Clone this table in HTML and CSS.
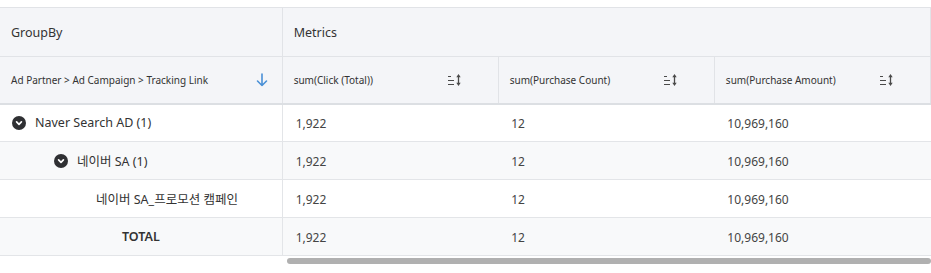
FILE: index.html
```html
<!DOCTYPE html>
<html lang="ko">
  <head>
    <meta charset="UTF-8" />
    <title>Report</title>
    <link rel="stylesheet" href="styles.css">
  </head>
  <body>
    <div class="report">
      <table class="grid">
        <colgroup>
          <col class="grid__col-group" />
          <col class="grid__col-metric" />
          <col class="grid__col-metric" />
          <col class="grid__col-metric" />
        </colgroup>
        <thead>
          <tr class="grid__head-top">
            <th>GroupBy</th>
            <th colspan="3">Metrics</th>
          </tr>
          <tr class="grid__head-sub">
            <th>
              <div class="head-cell">
                <span>Ad Partner &gt; Ad Campaign &gt; Tracking Link</span>
                <svg class="head-cell__arrow" viewBox="0 0 12 14" fill="none" stroke="currentColor" stroke-width="1.6" stroke-linecap="round" stroke-linejoin="round">
                  <path d="M6 1v11.5M1.5 8l4.5 4.5L10.5 8" />
                </svg>
              </div>
            </th>
            <th>
              <div class="head-cell">
                <span>sum(Click (Total))</span>
                <svg class="head-cell__sort" viewBox="0 0 16 14">
                  <path d="M1 3.5h3M1 7.5h6M1 11.5h6" stroke="currentColor" stroke-width="1.2" />
                  <path d="M11.5 3v8" stroke="currentColor" stroke-width="1.3" />
                  <path d="M9.3 4.2L11.5 1l2.2 3.2zM9.3 9.8L11.5 13l2.2-3.2z" fill="currentColor" />
                </svg>
              </div>
            </th>
            <th>
              <div class="head-cell">
                <span>sum(Purchase Count)</span>
                <svg class="head-cell__sort" viewBox="0 0 16 14">
                  <path d="M1 3.5h3M1 7.5h6M1 11.5h6" stroke="currentColor" stroke-width="1.2" />
                  <path d="M11.5 3v8" stroke="currentColor" stroke-width="1.3" />
                  <path d="M9.3 4.2L11.5 1l2.2 3.2zM9.3 9.8L11.5 13l2.2-3.2z" fill="currentColor" />
                </svg>
              </div>
            </th>
            <th>
              <div class="head-cell">
                <span>sum(Purchase Amount)</span>
                <svg class="head-cell__sort" viewBox="0 0 16 14">
                  <path d="M1 3.5h3M1 7.5h6M1 11.5h6" stroke="currentColor" stroke-width="1.2" />
                  <path d="M11.5 3v8" stroke="currentColor" stroke-width="1.3" />
                  <path d="M9.3 4.2L11.5 1l2.2 3.2zM9.3 9.8L11.5 13l2.2-3.2z" fill="currentColor" />
                </svg>
              </div>
            </th>
          </tr>
        </thead>
        <tbody>
          <tr>
            <td>
              <div class="group group--l1">
                <svg class="group__toggle" viewBox="0 0 14 14">
                  <circle cx="7" cy="7" r="7" fill="#2f3033" />
                  <path d="M4.6 5.9L7 8.3l2.4-2.4" fill="none" stroke="#fff" stroke-width="1.7" stroke-linecap="round" stroke-linejoin="round" />
                </svg>
                <span>Naver Search AD (1)</span>
              </div>
            </td>
            <td>1,922</td>
            <td>12</td>
            <td>10,969,160</td>
          </tr>
          <tr class="is-alt">
            <td>
              <div class="group group--l2">
                <svg class="group__toggle" viewBox="0 0 14 14">
                  <circle cx="7" cy="7" r="7" fill="#2f3033" />
                  <path d="M4.6 5.9L7 8.3l2.4-2.4" fill="none" stroke="#fff" stroke-width="1.7" stroke-linecap="round" stroke-linejoin="round" />
                </svg>
                <span>네이버 SA (1)</span>
              </div>
            </td>
            <td>1,922</td>
            <td>12</td>
            <td>10,969,160</td>
          </tr>
          <tr>
            <td>
              <div class="group group--l3">
                <span>네이버 SA_프로모션 캠페인</span>
              </div>
            </td>
            <td>1,922</td>
            <td>12</td>
            <td>10,969,160</td>
          </tr>
          <tr class="is-alt grid__total">
            <td>TOTAL</td>
            <td>1,922</td>
            <td>12</td>
            <td>10,969,160</td>
          </tr>
        </tbody>
      </table>
      <div class="scrollbar"></div>
    </div>
  </body>
</html>
```

FILE: styles.css
```css
* {
  margin: 0;
  padding: 0;
  box-sizing: border-box;
}
body {
  font-family: "Noto Sans", "Noto Sans CJK KR", sans-serif;
  color: #333;
  background-color: #fff;
}
.report {
  padding-top: 7px;
  width: 931px;
}
.grid {
  border-collapse: collapse;
  table-layout: fixed;
  width: 931px;
}
.grid__col-group {
  width: 282px;
}
.grid__col-metric {
  width: 216px;
}
.grid th {
  text-align: left;
  font-weight: 400;
  background-color: #f4f5f8;
  border: 1px solid #e1e3e7;
  border-left: none;
}
.grid__head-top th {
  height: 49px;
  padding: 0 11px;
  font-size: 12.5px;
  color: #333;
}
.grid__head-sub th {
  height: 47px;
  padding: 0 11px;
  font-size: 10px;
  color: #333;
  border-bottom: 2px solid #dcdfe3;
}
.head-cell {
  display: flex;
  align-items: center;
}
.head-cell span {
  flex: 1;
}
.head-cell__arrow {
  width: 12px;
  height: 14px;
  color: #4a90d6;
  margin-right: 3px;
}
.head-cell__sort {
  width: 16px;
  height: 14px;
  color: #4a4a4a;
  margin-right: 24px;
}
.grid td {
  height: 38px;
  padding: 2px 13px 0;
  font-size: 12px;
  color: #444;
  border-bottom: 1px solid #e3e5e8;
  background-color: #fff;
}
.grid td:first-child {
  border-right: 1px solid #e3e5e8;
  font-size: 12.5px;
  color: #333;
  padding: 0;
}
.grid tr.is-alt td {
  background-color: #f8f9fa;
}
.group {
  display: flex;
  align-items: center;
  gap: 9px;
}
.group--l1 {
  padding-left: 12px;
}
.group--l2 {
  padding-left: 54px;
}
.group--l3 {
  padding-left: 96px;
}
.group__toggle {
  width: 14px;
  height: 14px;
  flex: none;
}
.grid__total td:first-child {
  text-align: center;
  font-weight: 600;
}
.scrollbar {
  margin: 2px 0 0 287px;
  height: 6px;
  border-radius: 3px;
  background-color: #b0b0b0;
}
```
